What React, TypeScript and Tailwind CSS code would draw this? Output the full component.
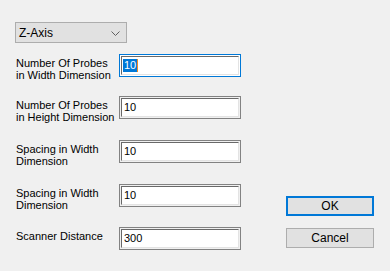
const rows = [
    { label: ['Number Of Probes', 'in Width Dimension'], value: '10', focused: true, mt: 'mt-[11px]' },
    { label: ['Number Of Probes', 'in Height Dimension'], value: '10', focused: false, mt: 'mt-[19px]' },
    { label: ['Spacing in Width', 'Dimension'], value: '10', focused: false, mt: 'mt-[21px]' },
    { label: ['Spacing in Width', 'Dimension'], value: '10', focused: false, mt: 'mt-[21px]' },
    { label: ['Scanner Distance'], value: '300', focused: false, mt: 'mt-[20px]' },
];

function TextBox({ value, focused }: { value: string; focused: boolean }) {
    return (
        <div
            className={
                focused
                    ? 'w-[122px] h-[23px] border border-[#0078d7] bg-white p-[1px]'
                    : 'w-[122px] h-[23px] border border-[#828282] bg-[#f0f0f0] p-[1px]'
            }
        >
            <div className="h-full border border-t-[#696969] border-l-[#696969] border-r-[#e3e3e3] border-b-[#e3e3e3] bg-white flex items-center pl-[1px]">
                {focused ? (
                    <span className="flex items-center">
                        <span className="bg-[#0078d7] text-white leading-[13px] px-[1px]">{value}</span>
                        <span className="w-[1px] h-[13px] bg-[#f08a24]"></span>
                    </span>
                ) : (
                    <span className="text-black leading-[13px] pl-[1px]">{value}</span>
                )}
            </div>
        </div>
    );
}

export default function App() {
    return (
        <div className="w-[390px] h-[271px] bg-[#f0f0f0] flex font-['Liberation_Sans',Arial,sans-serif] text-[11px] text-black">
            <div className="pl-[15px] pt-[22px] w-[245px]">
                <div className="w-[112px] h-[21px] border border-[#adadad] bg-[#e1e1e1] flex items-center justify-between pl-[3px] pr-[6px]">
                    <span className="text-[12px]">Z-Axis</span>
                    <svg width="9" height="5" viewBox="0 0 9 5" className="mt-[1px]">
                        <path d="M0.5 0.5 L4.5 4.5 L8.5 0.5" fill="none" stroke="#606060" strokeWidth="1" />
                    </svg>
                </div>

                {rows.map((row, index) => (
                    <div key={index} className={`flex h-[23px] ${row.mt}`}>
                        <div className="w-[104px] pl-[1px] pt-[3px] leading-[12px] whitespace-nowrap">
                            {row.label.map((line, i) => (
                                <div key={i}>{line}</div>
                            ))}
                        </div>
                        <TextBox value={row.value} focused={row.focused} />
                    </div>
                ))}
            </div>

            <div className="ml-[41px] pt-[196px] flex flex-col">
                <button className="w-[88px] h-[20px] border-2 border-[#0078d7] bg-[#e1e1e1] text-[12px] leading-none">
                    OK
                </button>
                <button className="mt-[12px] w-[88px] h-[20px] border border-[#adadad] bg-[#e1e1e1] text-[12px] leading-none">
                    Cancel
                </button>
            </div>
        </div>
    );
}
